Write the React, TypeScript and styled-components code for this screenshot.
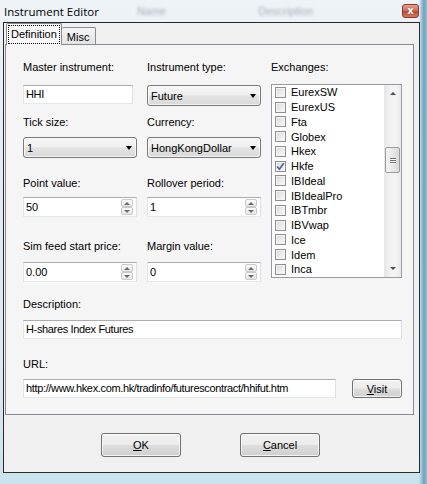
import React from 'react'
import styled, { createGlobalStyle } from 'styled-components'

const GlobalStyle = createGlobalStyle`
  html, body {
    margin: 0;
    padding: 0;
    background: #ffffff;
  }
  body {
    font-family: 'Liberation Sans', Arial, sans-serif;
    font-size: 11px;
    color: #000;
  }
`

const Window = styled.div`
  width: 427px;
  height: 484px;
  display: flex;
  flex-direction: column;
  overflow: hidden;
  background:
    linear-gradient(90deg, rgba(0, 0, 0, 0) 419px, #a9cadb 421px, #6aa2c0 424px, #95c1d4 427px),
    linear-gradient(180deg, #eef3f7 0%, #e2ebf1 30%, #dbe7ee 80%, #c9e3ec 100%);
`

const TitleBar = styled.div`
  height: 22px;
  display: flex;
  align-items: center;
  padding: 0 8px 0 4px;
  flex-shrink: 0;
`

const Title = styled.span`
  font-family: 'Open Sans', 'Liberation Sans', sans-serif;
  font-size: 11.5px;
  color: #000;
  margin-top: 1px;
`

const GhostText = styled.span<{ $offset: number }>`
  margin-left: ${({ $offset }) => $offset}px;
  font-family: 'Liberation Sans', sans-serif;
  font-size: 11px;
  color: rgba(70, 85, 100, 0.45);
  filter: blur(1.4px);
`

const CloseButton = styled.div`
  margin-left: auto;
  width: 17px;
  height: 14px;
  box-sizing: border-box;
  border: 1px solid #8a3b2e;
  border-radius: 3px;
  background: linear-gradient(#e3a190 0%, #d1705b 45%, #bf4a31 55%, #cf7a5f 100%);
  display: flex;
  align-items: center;
  justify-content: center;
  color: #fff;
  font-family: 'DejaVu Sans', sans-serif;
  font-weight: bold;
  font-size: 10px;
  line-height: 1;
  text-shadow: 0 0 1px #7a2a1a;
`

const Client = styled.div`
  flex: 1;
  margin: 0 7px 11px 3px;
  border: 1px solid #2a2a2a;
  background: #f0f0f0;
  display: flex;
  flex-direction: column;
`

const TabStrip = styled.div`
  display: flex;
  align-items: flex-end;
  height: 21px;
  padding-left: 2px;
  position: relative;
  z-index: 1;
`

const Tab = styled.div<{ $active?: boolean }>`
  box-sizing: border-box;
  height: ${({ $active }) => ($active ? 22 : 17)}px;
  margin-bottom: ${({ $active }) => ($active ? -1 : 0)}px;
  padding: ${({ $active }) => ($active ? '1px 1px 0' : '1px 6px 0 5px')};
  border: 1px solid #898c95;
  border-bottom: none;
  border-left-width: ${({ $active }) => ($active ? 1 : 0)}px;
  border-radius: 2px 2px 0 0;
  background: ${({ $active }) => ($active ? '#f9f9f9' : 'linear-gradient(#f4f4f4, #e3e3e3)')};
  display: flex;
  align-items: ${({ $active }) => ($active ? 'flex-start' : 'center')};
`

const FocusRect = styled.span`
  border: 1px dotted #000;
  height: 19px;
  box-sizing: border-box;
  padding: 0 2px;
  line-height: 17px;
`

const Panel = styled.div`
  box-sizing: border-box;
  height: 371px;
  margin: 0 5px 0 1px;
  border: 1px solid #898c95;
  background: #f5f5f5;
  padding: 16px 0 0 17px;
  display: flex;
  flex-direction: column;
`

const FieldGrid = styled.div`
  display: grid;
  grid-template-columns: 114px 114px 131px;
  grid-template-rows: 55px 61px 63px 42px;
  column-gap: 10px;
`

const Group = styled.div<{ $gap: number; $top?: number; $span?: number }>`
  display: flex;
  flex-direction: column;
  gap: ${({ $gap }) => $gap}px;
  margin-top: ${({ $top = 0 }) => $top}px;
  grid-row: ${({ $span }) => ($span ? `span ${$span}` : 'auto')};
`

const Label = styled.div`
  line-height: 13px;
  height: 13px;
  white-space: nowrap;
`

const TextBox = styled.div<{ $width?: number }>`
  box-sizing: border-box;
  width: ${({ $width }) => ($width ? `${$width}px` : '100%')};
  height: 19px;
  border: 1px solid;
  border-color: #abadb3 #dbdfe6 #e3e9ef #e2e3ea;
  background: #fff;
  padding: 0 2px;
  line-height: 17px;
  letter-spacing: -0.35px;
  white-space: nowrap;
  overflow: hidden;
`

const Combo = styled.div`
  box-sizing: border-box;
  width: 100%;
  height: 21px;
  border: 1px solid #7a7a7a;
  border-radius: 3px;
  background: linear-gradient(#f6f6f6 0%, #efefef 48%, #e3e3e3 52%, #d9d9d9 100%);
  box-shadow: inset 0 0 0 1px rgba(255, 255, 255, 0.7);
  display: flex;
  align-items: center;
  justify-content: space-between;
  padding: 0 4px 0 3px;
  white-space: nowrap;
`

const ComboArrow = styled.span`
  width: 0;
  height: 0;
  border-left: 3.5px solid transparent;
  border-right: 3.5px solid transparent;
  border-top: 4px solid #000;
  margin-top: 1px;
`

const Spinner = styled.div`
  box-sizing: border-box;
  width: 100%;
  height: 20px;
  border: 1px solid;
  border-color: #abadb3 #dbdfe6 #e3e9ef #e2e3ea;
  background: #fff;
  display: flex;
  align-items: center;
  justify-content: space-between;
  padding: 0 3px 0 2px;
`

const SpinButtons = styled.div`
  display: flex;
  flex-direction: column;
  width: 12px;
  height: 16px;
`

const SpinButton = styled.div`
  flex: 1;
  box-sizing: border-box;
  border: 1px solid #c9c9c9;
  border-radius: 2px;
  background: linear-gradient(#fbfbfb, #e8e8e8);
  display: flex;
  align-items: center;
  justify-content: center;
`

const SpinArrow = styled.span<{ $down?: boolean }>`
  width: 0;
  height: 0;
  border-left: 3px solid transparent;
  border-right: 3px solid transparent;
  ${({ $down }) => ($down ? 'border-top: 3px solid #6b6b6b;' : 'border-bottom: 3px solid #6b6b6b;')}
`

const ListBox = styled.div`
  box-sizing: border-box;
  height: 194px;
  border: 1px solid #969aa2;
  background: #fff;
  display: flex;
`

const ListItems = styled.div`
  flex: 1;
  display: flex;
  flex-direction: column;
`

const ListItem = styled.div`
  height: 14.75px;
  display: flex;
  align-items: center;
  gap: 5px;
  padding-left: 3px;
  white-space: nowrap;
`

const CheckBox = styled.span`
  box-sizing: border-box;
  width: 11px;
  height: 11px;
  border: 1px solid #8f8f8f;
  background: linear-gradient(135deg, #d6d6d6 0%, #ececec 55%, #fbfbfb 100%);
  box-shadow: inset 0 0 0 1px #f4f4f4;
  display: flex;
  align-items: center;
  justify-content: center;
`

const ScrollBar = styled.div`
  width: 17px;
  display: flex;
  flex-direction: column;
  align-items: center;
  background: linear-gradient(90deg, #e6e6e6, #f3f3f3 40%, #f3f3f3 70%, #e9e9e9);
`

const ScrollArrowBox = styled.div`
  height: 17px;
  width: 100%;
  display: flex;
  align-items: center;
  justify-content: center;
`

const ScrollArrow = styled.span<{ $down?: boolean }>`
  width: 0;
  height: 0;
  border-left: 3px solid transparent;
  border-right: 3px solid transparent;
  ${({ $down }) => ($down ? 'border-top: 3px solid #4d4d4d;' : 'border-bottom: 3px solid #4d4d4d;')}
`

const ScrollTrack = styled.div`
  flex: 1;
  width: 100%;
  display: flex;
  flex-direction: column;
  align-items: center;
`

const Thumb = styled.div<{ $offset: number }>`
  margin-top: ${({ $offset }) => $offset}px;
  box-sizing: border-box;
  width: 15px;
  height: 26px;
  border: 1px solid #9b9b9b;
  border-radius: 2px;
  background: linear-gradient(90deg, #f3f3f3, #e8e8e8 50%, #d9d9d9);
  display: flex;
  flex-direction: column;
  align-items: center;
  justify-content: center;
  gap: 1px;
`

const Grip = styled.span`
  width: 6px;
  height: 1px;
  background: #6f6f6f;
  box-shadow: 0 1px 0 #ffffff;
`

const UrlRow = styled.div`
  display: flex;
  align-items: center;
  gap: 16px;
`

const Button = styled.div<{ $width: number; $height: number }>`
  box-sizing: border-box;
  width: ${({ $width }) => $width}px;
  height: ${({ $height }) => $height}px;
  border: 1px solid #707070;
  border-radius: 3px;
  background: linear-gradient(#f2f2f2 0%, #ebebeb 48%, #dddddd 52%, #cfcfcf 100%);
  box-shadow: inset 0 0 0 1px rgba(255, 255, 255, 0.75);
  display: flex;
  align-items: center;
  justify-content: center;
`

const ButtonRow = styled.div`
  display: flex;
  justify-content: center;
  gap: 59px;
  padding: 18px 2px 0 0;
`

const exchanges = [
  'EurexSW',
  'EurexUS',
  'Fta',
  'Globex',
  'Hkex',
  'Hkfe',
  'IBIdeal',
  'IBIdealPro',
  'IBTmbr',
  'IBVwap',
  'Ice',
  'Idem',
  'Inca',
]

const CheckMark = () => (
  <svg width="9" height="9" viewBox="0 0 9 9">
    <path d="M1.2 4.6 L3.4 7.2 L7.8 1.3" fill="none" stroke="#4a5f8c" strokeWidth="1.6" />
  </svg>
)

const NumberField = ({ value }: { value: string }) => (
  <Spinner>
    <span>{value}</span>
    <SpinButtons>
      <SpinButton>
        <SpinArrow />
      </SpinButton>
      <SpinButton>
        <SpinArrow $down />
      </SpinButton>
    </SpinButtons>
  </Spinner>
)

const ComboField = ({ value }: { value: string }) => (
  <Combo>
    <span>{value}</span>
    <ComboArrow />
  </Combo>
)

export default function App() {
  return (
    <>
      <GlobalStyle />
      <Window>
        <TitleBar>
          <Title>Instrument Editor</Title>
          <GhostText $offset={38}>Name</GhostText>
          <GhostText $offset={92}>Description</GhostText>
          <CloseButton>x</CloseButton>
        </TitleBar>
        <Client>
          <TabStrip>
            <Tab $active>
              <FocusRect>Definition</FocusRect>
            </Tab>
            <Tab>Misc</Tab>
          </TabStrip>
          <Panel>
            <FieldGrid>
              <Group $gap={11}>
                <Label>Master instrument:</Label>
                <TextBox $width={110}>HHI</TextBox>
              </Group>
              <Group $gap={11}>
                <Label>Instrument type:</Label>
                <ComboField value="Future" />
              </Group>
              <Group $gap={10} $span={4}>
                <Label>Exchanges:</Label>
                <ListBox>
                  <ListItems>
                    {exchanges.map((name) => (
                      <ListItem key={name}>
                        <CheckBox>{name === 'Hkfe' && <CheckMark />}</CheckBox>
                        <span>{name}</span>
                      </ListItem>
                    ))}
                  </ListItems>
                  <ScrollBar>
                    <ScrollArrowBox>
                      <ScrollArrow />
                    </ScrollArrowBox>
                    <ScrollTrack>
                      <Thumb $offset={45}>
                        <Grip />
                        <Grip />
                        <Grip />
                      </Thumb>
                    </ScrollTrack>
                    <ScrollArrowBox>
                      <ScrollArrow $down />
                    </ScrollArrowBox>
                  </ScrollBar>
                </ListBox>
              </Group>
              <Group $gap={8}>
                <Label>Tick size:</Label>
                <ComboField value="1" />
              </Group>
              <Group $gap={8}>
                <Label>Currency:</Label>
                <ComboField value="HongKongDollar" />
              </Group>
              <Group $gap={7}>
                <Label>Point value:</Label>
                <NumberField value="50" />
              </Group>
              <Group $gap={7}>
                <Label>Rollover period:</Label>
                <NumberField value="1" />
              </Group>
              <Group $gap={9}>
                <Label>Sim feed start price:</Label>
                <NumberField value="0.00" />
              </Group>
              <Group $gap={9}>
                <Label>Margin value:</Label>
                <NumberField value="0" />
              </Group>
            </FieldGrid>
            <Group $gap={9} $top={16}>
              <Label>Description:</Label>
              <TextBox $width={379}>H-shares Index Futures</TextBox>
            </Group>
            <Group $gap={8} $top={19}>
              <Label>URL:</Label>
              <UrlRow>
                <TextBox $width={313}>http://www.hkex.com.hk/tradinfo/futurescontract/hhifut.htm</TextBox>
                <Button $width={50} $height={19}>
                  <span>
                    <u>V</u>isit
                  </span>
                </Button>
              </UrlRow>
            </Group>
          </Panel>
          <ButtonRow>
            <Button $width={80} $height={24}>
              <span>
                <u>O</u>K
              </span>
            </Button>
            <Button $width={80} $height={24}>
              <span>
                <u>C</u>ancel
              </span>
            </Button>
          </ButtonRow>
        </Client>
      </Window>
    </>
  )
}
